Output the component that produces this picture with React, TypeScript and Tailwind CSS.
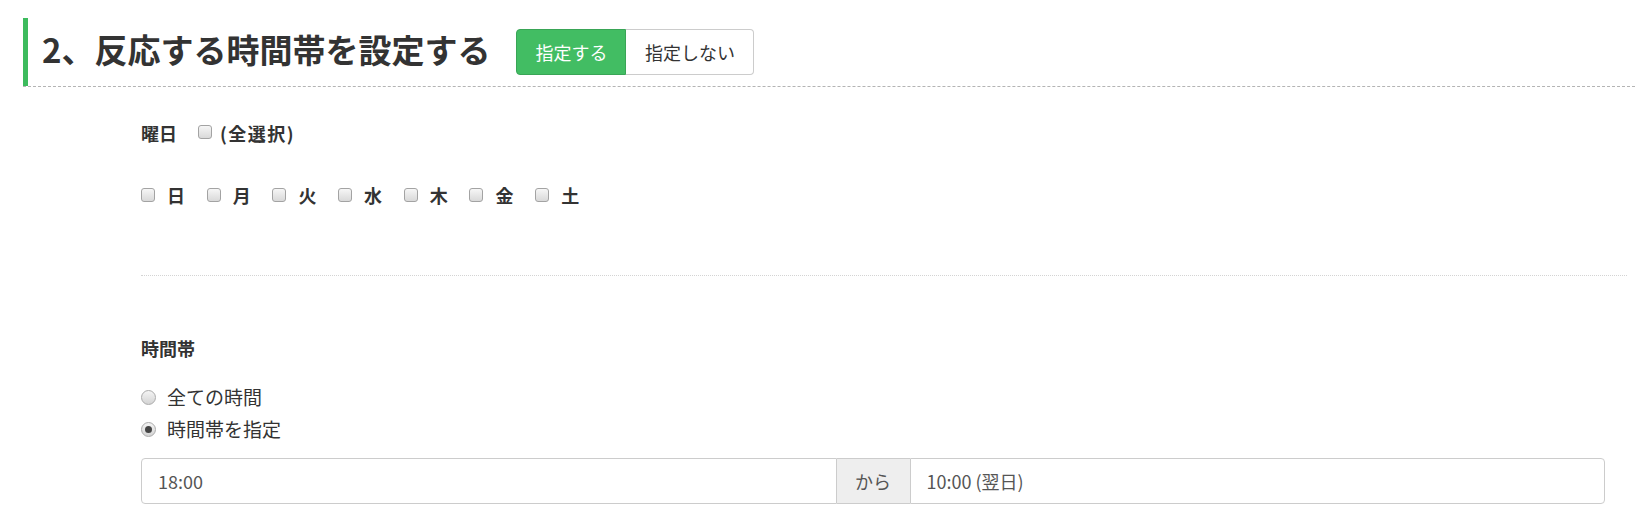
import React from "react";

const FONT = { fontFamily: '"Noto Sans CJK JP", "Noto Sans", sans-serif' };

const DAYS = ["日", "月", "火", "水", "木", "金", "土"];

function Check() {
    return (
        <span className="inline-block w-[14px] h-[14px] rounded-[3px] border border-[#a3a3a3] bg-linear-to-b from-[#f6f6f6] to-[#d9d9d9] shrink-0"></span>
    );
}

function Radio({ checked }: { checked?: boolean }) {
    return (
        <span className="flex items-center justify-center w-[15px] h-[15px] rounded-full border border-[#ababab] bg-linear-to-b from-[#f4f4f4] to-[#d4d4d4] shrink-0">
            {checked && <span className="block w-[7px] h-[7px] rounded-full bg-[#444]"></span>}
        </span>
    );
}

export default function App() {
    return (
        <div className="w-full h-[516px] bg-white text-[#333] overflow-hidden" style={FONT}>
            <div className="pt-[18px] pl-[23px]">
                <div className="border-b border-dashed border-[#b4b4b4]">
                    <div className="flex items-center h-[68px] border-l-[5px] border-[#3dbb5d] pl-[14px]">
                        <h2 className="text-[33px] font-bold leading-none -mt-[5px] text-[#333]">
                            2、反応する時間帯を設定する
                        </h2>
                        <div className="flex ml-[26px] h-[46px] text-[18px]">
                            <button className="w-[110px] h-full rounded-l-[4px] bg-[#42bd63] border border-[#39a556] text-white">
                                指定する
                            </button>
                            <button className="w-[128px] h-full rounded-r-[4px] bg-white border border-l-0 border-[#cccccc] text-[#333]">
                                指定しない
                            </button>
                        </div>
                    </div>
                </div>
            </div>

            <div className="pl-[141px] pr-[8px]">
                <div className="flex items-center h-[24px] mt-[34px] text-[18px] font-bold">
                    <span>曜日</span>
                    <span className="ml-[21px] -mt-[4px]"><Check /></span>
                    <span className="ml-[8px] tracking-[1.5px]">(全選択)</span>
                </div>

                <div className="flex items-center h-[24px] mt-[38px] gap-[20.7px] text-[18px] font-bold">
                    {DAYS.map((d) => (
                        <label key={d} className="flex items-center gap-[12px]">
                            <Check />
                            <span className="w-[19px] leading-none">{d}</span>
                        </label>
                    ))}
                </div>

                <div className="mt-[68px] border-t border-dotted border-[#d4d4d4]"></div>

                <div className="flex items-center h-[24px] mt-[60px] text-[18px] font-bold">時間帯</div>

                <label className="flex items-center h-[28px] mt-[23px] gap-[11px] text-[19px]">
                    <Radio />
                    <span>全ての時間</span>
                </label>
                <label className="flex items-center h-[28px] mt-[4px] gap-[11px] text-[19px]">
                    <Radio checked />
                    <span>時間帯を指定</span>
                </label>

                <div className="flex h-[46px] mt-[15px] mr-[22px] text-[18px] text-[#555]">
                    <div className="flex-1 flex items-center pl-[16px] border border-[#cccccc] rounded-l-[4px] bg-white">
                        18:00
                    </div>
                    <div className="w-[73px] flex items-center justify-center bg-[#eeeeee] border-y border-[#cccccc]">
                        から
                    </div>
                    <div className="flex-1 flex items-center pl-[16px] border border-[#cccccc] rounded-r-[4px] bg-white">
                        10:00 (翌日)
                    </div>
                </div>
            </div>
        </div>
    );
}
